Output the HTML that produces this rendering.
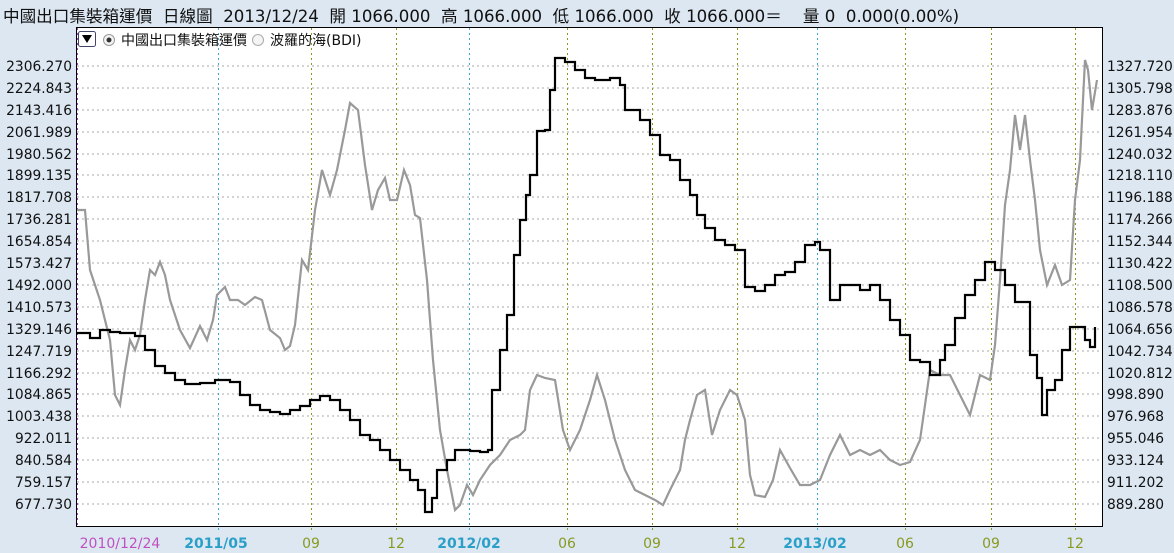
<!DOCTYPE html><html><head><meta charset="utf-8"><style>
body{margin:0;width:1174px;height:553px;background:#dce7f2;font-family:"DejaVu Sans","Noto Sans CJK TC",sans-serif;overflow:hidden;position:relative}
.t{position:absolute;font-size:14px;color:#111;white-space:nowrap}
</style></head><body>
<div class="t" style="left:3px;top:3px;font-size:16.6px">中國出口集裝箱運價&nbsp;&nbsp;日線圖&nbsp;&nbsp;2013/12/24&nbsp;&nbsp;開 1066.000&nbsp;&nbsp;高 1066.000&nbsp;&nbsp;低 1066.000&nbsp;&nbsp;收 1066.000＝&nbsp;&nbsp;&nbsp;&nbsp;量 0&nbsp;&nbsp;0.000(0.00%)</div>
<svg width="1174" height="553" style="position:absolute;left:0;top:0" font-family="DejaVu Sans, Noto Sans CJK TC, sans-serif">
<rect x="76.5" y="27.5" width="1026" height="499" fill="#fff" stroke="#000"/>
<g stroke="#aaa" stroke-dasharray="2,3">
<path d="M77 66H1102M77 88H1102M77 110H1102M77 132H1102M77 154H1102M77 175H1102M77 197H1102M77 219H1102M77 241H1102M77 263H1102M77 285H1102M77 307H1102M77 329H1102M77 351H1102M77 373H1102M77 394H1102M77 416H1102M77 438H1102M77 460H1102M77 482H1102M77 504H1102"/>
</g>
<g stroke-dasharray="2,3">
<path d="M77.5 28V526" stroke="#a040c0"/>
<path d="M218.5 28V532M469.5 28V532M817.5 28V532" stroke="#40a8cc"/>
<path d="M311.5 28V532M396.5 28V532M567.5 28V532M652.5 28V532M737.5 28V532M905.5 28V532M991.5 28V532M1075.5 28V532" stroke="#8a9a20"/>
</g>
<g font-size="13.8" fill="#111" text-anchor="end">
<text x="72" y="71">2306.270</text><text x="72" y="93">2224.843</text><text x="72" y="115">2143.416</text><text x="72" y="137">2061.989</text><text x="72" y="159">1980.562</text><text x="72" y="180">1899.135</text><text x="72" y="202">1817.708</text><text x="72" y="224">1736.281</text><text x="72" y="246">1654.854</text><text x="72" y="268">1573.427</text><text x="72" y="290">1492.000</text><text x="72" y="312">1410.573</text><text x="72" y="334">1329.146</text><text x="72" y="356">1247.719</text><text x="72" y="378">1166.292</text><text x="72" y="399">1084.865</text><text x="72" y="421">1003.438</text><text x="72" y="443">922.011</text><text x="72" y="465">840.584</text><text x="72" y="487">759.157</text><text x="72" y="509">677.730</text>
</g>
<g font-size="13.8" fill="#111">
<text x="1107" y="71">1327.720</text><text x="1107" y="93">1305.798</text><text x="1107" y="115">1283.876</text><text x="1107" y="137">1261.954</text><text x="1107" y="159">1240.032</text><text x="1107" y="180">1218.110</text><text x="1107" y="202">1196.188</text><text x="1107" y="224">1174.266</text><text x="1107" y="246">1152.344</text><text x="1107" y="268">1130.422</text><text x="1107" y="290">1108.500</text><text x="1107" y="312">1086.578</text><text x="1107" y="334">1064.656</text><text x="1107" y="356">1042.734</text><text x="1107" y="378">1020.812</text><text x="1107" y="399">998.890</text><text x="1107" y="421">976.968</text><text x="1107" y="443">955.046</text><text x="1107" y="465">933.124</text><text x="1107" y="487">911.202</text><text x="1107" y="509">889.280</text>
</g>
<g font-size="14" text-anchor="middle">
<text x="120" y="548" fill="#c050c0">2010/12/24</text>
<text x="216" y="548" fill="#2aa0c8" font-weight="bold">2011/05</text>
<text x="311" y="548" fill="#8a9a20">09</text><text x="396" y="548" fill="#8a9a20">12</text>
<text x="469" y="548" fill="#2aa0c8" font-weight="bold">2012/02</text>
<text x="567" y="548" fill="#8a9a20">06</text><text x="652" y="548" fill="#8a9a20">09</text><text x="737" y="548" fill="#8a9a20">12</text>
<text x="815" y="548" fill="#2aa0c8" font-weight="bold">2013/02</text>
<text x="905" y="548" fill="#8a9a20">06</text><text x="991" y="548" fill="#8a9a20">09</text><text x="1075" y="548" fill="#8a9a20">12</text>
</g>
<polyline fill="none" stroke="#999" stroke-width="2.2" points="77,210 85,210 90,270 100,300 110,340 115,395 120,405 125,370 130,340 135,350 140,335 145,300 150,270 155,275 160,262 165,275 170,300 180,330 190,348 200,326 207,340 213,320 217,295 225,287 230,300 238,300 245,305 255,297 262,300 270,330 280,338 285,350 290,346 295,325 302,260 308,270 315,210 322,170 330,195 337,170 345,130 350,103 358,110 365,165 372,210 378,190 385,178 390,200 397,200 404,170 410,185 415,215 420,218 427,280 433,360 440,430 447,470 455,510 460,505 467,485 473,495 480,480 490,465 500,455 510,440 520,435 525,430 530,390 537,375 545,378 555,380 563,430 570,450 580,430 590,400 597,375 605,400 615,440 625,470 635,490 645,495 655,500 663,505 670,490 680,470 685,440 690,420 697,395 705,390 712,435 720,410 730,390 737,395 745,420 750,475 755,495 765,497 773,480 780,450 790,468 800,485 810,485 820,480 830,455 840,435 850,455 860,450 870,455 880,450 890,460 900,465 910,462 920,440 930,370 940,375 950,375 960,395 970,415 980,375 990,380 995,345 1000,280 1005,205 1010,170 1015,115 1020,150 1025,115 1030,160 1035,200 1040,250 1047,285 1055,265 1062,285 1070,280 1075,200 1080,160 1085,60 1088,70 1092,110 1097,80"/>
<path fill="none" stroke="#000" stroke-width="2.2" d="M77 333H90V338H100V330H110V332H120V333H135V336H145V350H155V366H165V373H175V380H185V384H200V383H215V380H230V382H240V395H250V405H260V410H270V412H280V414H290V410H300V406H310V400H320V396H330V400H340V410H350V420H360V435H370V440H380V450H390V460H400V470H410V480H418V490H425V512H432V498H437V470H447V460H455V450H470V451H480V452H488V450H492V390H500V350H507V315H514V255H520V220H526V195H530V175H537V131H545V130H550V90H555V58H565V62H575V70H585V78H595V80H610V78H620V85H625V110H640V120H650V135H660V155H670V160H680V180H690V195H697V215H705V228H715V240H725V245H735V250H745V287H755V291H765V285H775V275H785V272H795V262H805V245H815V242H820V250H830V300H840V285H850V285H860V290H870V285H880V300H890V320H900V335H910V360H920V362H930V375H940V360H945V345H955V318H965V295H975V280H985V262H995V270H1005V285H1015V302H1025V302H1030V355H1037V378H1042V415H1047V390H1055V380H1062V350H1070V327H1080V327H1085V340H1090V347H1095V327"/>
<rect x="78.5" y="31.5" width="17" height="15" fill="#fff" stroke="#446" rx="2"/>
<path d="M82 35H92L87 43Z" fill="#000"/>
<circle cx="109" cy="40" r="5.5" fill="#f4f4f4" stroke="#999"/><circle cx="109" cy="40" r="2.5" fill="#333"/>
<text x="121" y="45" font-size="14" fill="#111">中國出口集裝箱運價</text>
<circle cx="258" cy="40" r="5.5" fill="#f4f4f4" stroke="#aaa"/>
<text x="270" y="45" font-size="14" fill="#111">波羅的海(BDI)</text>
</svg>
</body></html>
